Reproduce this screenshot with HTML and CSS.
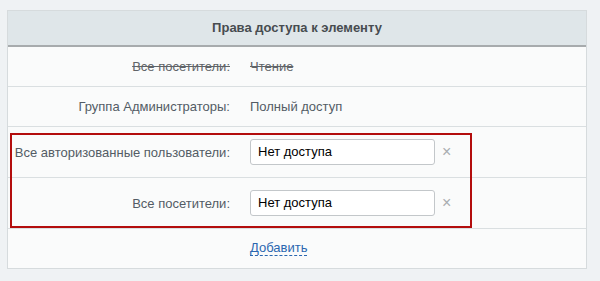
FILE: index.html
```html
<!DOCTYPE html>
<html lang="ru">
<head>
<meta charset="utf-8">
<link rel="stylesheet" href="styles.css">
</head>
<body>
<div class="panel">
  <div class="panel-head">Права доступа к элементу</div>
  <div class="row row-short">
    <div class="label strike">Все посетители:</div>
    <div class="value strike">Чтение</div>
  </div>
  <div class="row row-short">
    <div class="label">Группа Администраторы:</div>
    <div class="value">Полный доступ</div>
  </div>
  <div class="highlighted">
    <div class="row row-tall first">
      <div class="label">Все авторизованные пользователи:</div>
      <div class="value">
        <div class="select">Нет доступа</div>
        <span class="remove">×</span>
      </div>
    </div>
    <div class="row row-tall">
      <div class="label">Все посетители:</div>
      <div class="value">
        <div class="select">Нет доступа</div>
        <span class="remove">×</span>
      </div>
    </div>
    <div class="red-frame"></div>
  </div>
  <div class="row row-short footer">
    <div class="label"></div>
    <div class="value"><a class="add-link" href="#">Добавить</a></div>
  </div>
</div>
</body>
</html>
```
FILE: styles.css
```css
html, body {
  margin: 0;
  padding: 0;
}
body {
  background: #eff2f4;
  padding: 10px 13px 0 7px;
  font-family: "Liberation Sans", Arial, sans-serif;
  font-size: 13px;
  height: 281px;
  box-sizing: border-box;
}
.panel {
  background: #fafbfb;
  border: 1px solid #d6dbdd;
}
.panel-head {
  height: 34px;
  line-height: 34px;
  background: #dfe6e9;
  border-bottom: 2px solid #a7abad;
  text-align: center;
  font-weight: bold;
  color: #474c50;
}
.row {
  display: grid;
  grid-template-columns: 222px 1fr;
  column-gap: 20px;
  align-items: center;
  border-bottom: 1px solid #dadfe1;
  color: #535c65;
}
.row-short {
  height: 39px;
}
.row-tall {
  height: 50px;
}
.label {
  text-align: right;
}
.strike {
  text-decoration: line-through;
  color: #606468;
}
.value {
  display: flex;
  align-items: center;
}
.highlighted {
  position: relative;
}
.red-frame {
  position: absolute;
  left: 2px;
  top: 6px;
  width: 458px;
  height: 91px;
  border: 2px solid #b30d0d;
  pointer-events: none;
}
.select {
  width: 176px;
  height: 24px;
  line-height: 24px;
  padding-left: 7px;
  background: #fff;
  border: 1px solid #c3c7ca;
  border-radius: 3px;
  color: #000;
  font-size: 13px;
}
.remove {
  margin-left: 7px;
  color: #a9adb0;
  font-size: 16px;
  line-height: 1;
}
.footer {
  height: 39px;
  border-bottom: none;
}
.add-link {
  color: #2a67b0;
  text-decoration: none;
  border-bottom: 1px dashed #2a67b0;
  line-height: 14px;
}
```
